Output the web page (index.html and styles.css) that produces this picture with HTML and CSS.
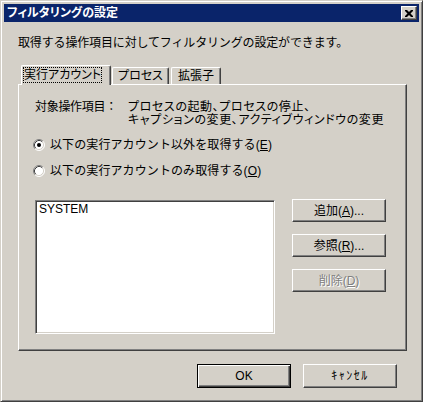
FILE: index.html
```html
<!DOCTYPE html>
<html lang="ja">
<head>
<meta charset="utf-8">
<title>フィルタリングの設定</title>
<link rel="stylesheet" href="styles.css">
</head>
<body>
<div class="window">
  <div class="titlebar">
    <span class="title">フィルタリングの設定</span>
    <span class="close">
      <svg width="8" height="7" viewBox="0 0 8 7"><path d="M0 0h2l2 2 2-2h2v1L5.5 3.5 8 6v1H6L4 5 2 7H0V6l2.5-2.5L0 1z" fill="#000"/></svg>
    </span>
  </div>
  <div class="content">
    <p class="desc">取得する操作項目に対してフィルタリングの設定ができます。</p>
    <div class="tabs">
      <div class="tab tab-account selected"><span class="focus">実行アカウント</span></div>
      <div class="tab tab-process">プロセス</div>
      <div class="tab tab-ext">拡張子</div>
    </div>
    <div class="panel">
      <div class="info">
        <span class="info-label">対象操作項目：</span>
        <span class="info-value">プロセスの起動、プロセスの停止、<br>キャプションの変更、アクティブウィンドウの変更</span>
      </div>
      <div class="radios">
        <div class="radio">
          <svg class="radio-icon" width="12" height="12" viewBox="0 0 12 12">
            <circle cx="6" cy="6" r="5" fill="#fff"/>
            <path d="M2.11 9.89A5.5 5.5 0 0 1 9.89 2.11" fill="none" stroke="#808080"/>
            <path d="M2.82 9.18A4.5 4.5 0 0 1 9.18 2.82" fill="none" stroke="#404040"/>
            <path d="M9.89 2.11A5.5 5.5 0 0 1 2.11 9.89" fill="none" stroke="#fff"/>
            <path d="M9.18 2.82A4.5 4.5 0 0 1 2.82 9.18" fill="none" stroke="#d4d0c8"/>
            <circle cx="6" cy="6" r="2" fill="#000"/>
          </svg>
          <span>以下の実行アカウント以外を取得する(<u>E</u>)</span>
        </div>
        <div class="radio">
          <svg class="radio-icon" width="12" height="12" viewBox="0 0 12 12">
            <circle cx="6" cy="6" r="5" fill="#fff"/>
            <path d="M2.11 9.89A5.5 5.5 0 0 1 9.89 2.11" fill="none" stroke="#808080"/>
            <path d="M2.82 9.18A4.5 4.5 0 0 1 9.18 2.82" fill="none" stroke="#404040"/>
            <path d="M9.89 2.11A5.5 5.5 0 0 1 2.11 9.89" fill="none" stroke="#fff"/>
            <path d="M9.18 2.82A4.5 4.5 0 0 1 2.82 9.18" fill="none" stroke="#d4d0c8"/>
          </svg>
          <span>以下の実行アカウントのみ取得する(<u>O</u>)</span>
        </div>
      </div>
      <div class="list-row">
        <div class="listbox">SYSTEM</div>
        <div class="side-buttons">
          <div class="btn">追加(<u>A</u>)...</div>
          <div class="btn">参照(<u>R</u>)...</div>
          <div class="btn disabled">削除(<u>D</u>)</div>
        </div>
      </div>
    </div>
    <div class="footer">
      <div class="btn btn-footer default">OK</div>
      <div class="btn btn-footer cancel">ｷｬﾝｾﾙ</div>
    </div>
  </div>
</div>
</body>
</html>
```
FILE: styles.css
```css
* { box-sizing: border-box; }

body {
  margin: 0;
  background: #ffffff;
  font-family: "Liberation Sans", "Noto Sans CJK JP", sans-serif;
  font-size: 12px;
  color: #000;
}

.window {
  width: 423px;
  height: 402px;
  background: #d4d0c8;
  border: 1px solid;
  border-color: #d4d0c8 #404040 #404040 #d4d0c8;
  box-shadow: inset 1px 1px #ffffff, inset -1px -1px #808080;
  padding: 3px;
}

.titlebar {
  height: 18px;
  background: #0a246a;
  display: flex;
  align-items: center;
  justify-content: space-between;
  padding: 0 2px 0 3px;
}

.title {
  color: #fff;
  font-weight: bold;
  line-height: 18px;
  font-feature-settings: "palt";
}

.close {
  width: 16px;
  height: 14px;
  background: #d4d0c8;
  border: 1px solid;
  border-color: #ffffff #404040 #404040 #ffffff;
  box-shadow: inset -1px -1px #808080;
  display: flex;
  align-items: center;
  justify-content: center;
}

.close svg { display: block; margin-left: -1px; }

.content {
  padding-left: 14px;
}

.desc {
  margin: 14px 0 0;
  line-height: 14px;
  letter-spacing: -0.15px;
}

.tabs {
  display: flex;
  align-items: flex-end;
  height: 20px;
  margin-top: 15px;
  margin-bottom: -1px;
  padding-left: 3px;
  position: relative;
  z-index: 1;
  font-feature-settings: "palt";
}

.tab {
  height: 17px;
  margin-bottom: 1px;
  background: #d4d0c8;
  border: 1px solid;
  border-bottom: none;
  border-color: #ffffff #404040 #404040 #ffffff;
  box-shadow: inset -1px 0 #808080;
  border-radius: 2px 2px 0 0;
  display: flex;
  align-items: center;
  justify-content: center;
  line-height: 14px;
  white-space: nowrap;
}

.tab.selected {
  height: 20px;
  margin-bottom: 0;
  align-items: flex-start;
  justify-content: flex-start;
  padding: 1px 8px 0 1px;
}

.tab-account { width: 90px; }
.tab-process { width: 57px; margin-left: 1px; }
.tab-ext { width: 50px; margin-left: 2px; }

.focus {
  display: block;
  width: 100%;
  border: 1px dotted #000;
  line-height: 14px;
  text-align: center;
  white-space: nowrap;
}

.panel {
  width: 389px;
  height: 267px;
  border: 1px solid;
  border-color: #ffffff #404040 #404040 #ffffff;
  box-shadow: inset -1px -1px #808080;
  padding: 16px 0 0 16px;
}

.info {
  display: flex;
  line-height: 13px;
}

.info-label { width: 93px; flex: none; letter-spacing: -0.3px; }
.info-value { font-feature-settings: "palt"; letter-spacing: 0.6px; }

.radios {
  margin-top: 12px;
  display: flex;
  flex-direction: column;
  gap: 14px;
}

.radio {
  display: flex;
  align-items: center;
  height: 12px;
  line-height: 12px;
  letter-spacing: 0.1px;
}

.radio-icon {
  display: block;
  margin-left: -2px;
  margin-right: 5px;
  flex: none;
}

.list-row {
  display: flex;
  align-items: flex-start;
  margin-top: 23px;
}

.listbox {
  width: 240px;
  height: 134px;
  background: #fff;
  border: 1px solid;
  border-color: #808080 #ffffff #ffffff #808080;
  box-shadow: inset 1px 1px #404040, inset -1px -1px #d4d0c8;
  padding: 2px 3px;
  line-height: 12px;
}

.side-buttons {
  margin-left: 17px;
  margin-top: -1px;
  display: flex;
  flex-direction: column;
  gap: 12px;
}

.btn {
  width: 94px;
  height: 23px;
  background: #d4d0c8;
  border: 1px solid;
  border-color: #ffffff #404040 #404040 #ffffff;
  box-shadow: inset -1px -1px #808080;
  display: flex;
  align-items: center;
  justify-content: center;
  line-height: 12px;
}

.btn.disabled {
  color: #808080;
  text-shadow: 1px 1px #ffffff;
}

.footer {
  display: flex;
  justify-content: flex-end;
  gap: 12px;
  margin-top: 13px;
  padding-right: 22px;
}

.btn-footer { height: 24px; }

.cancel { letter-spacing: 1.5px; }

.btn.default {
  border-color: #000;
  box-shadow: inset 1px 1px #ffffff, inset -1px -1px #404040, inset -2px -2px #808080;
}
```
